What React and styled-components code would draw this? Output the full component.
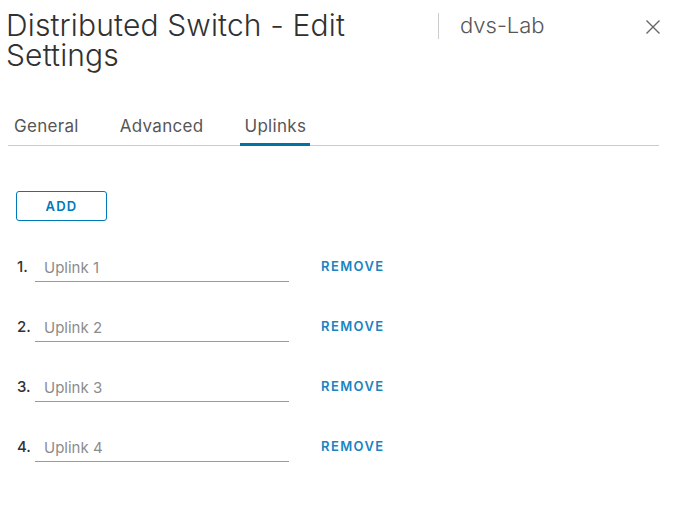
import React from 'react';
import styled, { createGlobalStyle } from 'styled-components';

const GlobalStyle = createGlobalStyle`
  body {
    margin: 0;
    background: #fff;
    font-family: Inter, "Open Sans", sans-serif;
  }
`;

const Modal = styled.div`
  width: 679px;
  height: 524px;
  box-sizing: border-box;
  padding: 10px 0 0 6px;
`;

const Header = styled.div`
  display: flex;
  align-items: flex-start;
`;

const Title = styled.h1`
  margin: 0;
  width: 420px;
  font-size: 30px;
  line-height: 30px;
  font-weight: 300;
  letter-spacing: 0.15px;
  color: #313131;
`;

const Divider = styled.div`
  width: 1px;
  height: 26px;
  margin: 3px 0 0 12px;
  background: #ccc;
`;

const Subtitle = styled.div`
  flex: 1;
  margin-left: 21px;
  font-size: 22px;
  line-height: 30px;
  font-weight: 300;
  color: #565656;
`;

const Close = styled.button`
  border: 0;
  background: none;
  padding: 0;
  margin: 9px 18px 0 0;
  width: 16px;
  height: 16px;
  cursor: pointer;
`;

const Tabs = styled.nav`
  display: flex;
  gap: 33px;
  width: 651px;
  margin: 40px 0 0 2px;
  padding-left: 2px;
  box-sizing: border-box;
  border-bottom: 1px solid #ccc;
`;

const Tab = styled.div`
  padding: 4px 4px 5px;
  font-size: 17px;
  line-height: 24px;
  letter-spacing: 0.3px;
  color: #565656;
  border-bottom: 3px solid ${(p) => (p.active ? '#0072a3' : 'transparent')};
  margin-bottom: -1px;
`;

const Body = styled.div`
  padding: 45px 0 0 10px;
`;

const OutlineButton = styled.button`
  width: 91px;
  height: 30px;
  border: 1px solid #0079b8;
  border-radius: 3px;
  background: #fff;
  color: #0079b8;
  font-family: inherit;
  font-size: 13px;
  font-weight: 600;
  letter-spacing: 1.2px;
  cursor: pointer;
`;

const List = styled.ol`
  list-style: none;
  margin: 33px 0 0;
  padding: 0;
  display: flex;
  flex-direction: column;
  gap: 36px;
`;

const Row = styled.li`
  display: flex;
  align-items: center;
  height: 24px;
`;

const Num = styled.span`
  width: 18px;
  padding-left: 1px;
  font-size: 15px;
  font-weight: 500;
  color: #313131;
`;

const Field = styled.div`
  width: 254px;
  box-sizing: border-box;
  padding: 0 0 3px 9px;
  border-bottom: 1px solid #9a9a9a;
  font-size: 15px;
  line-height: 20px;
  color: #8c8c8c;
  transform: translateY(4px);
`;

const TextButton = styled.button`
  margin-left: 28px;
  border: 0;
  background: none;
  padding: 0 4px;
  color: #1a83c0;
  font-family: inherit;
  font-size: 13px;
  font-weight: 600;
  letter-spacing: 1.4px;
  cursor: pointer;
`;

const CloseIcon = () => (
  <svg width="16" height="16" viewBox="0 0 16 16">
    <path d="M1.5 1.5 L14.5 14.5 M14.5 1.5 L1.5 14.5" stroke="#666" strokeWidth="1.4" fill="none" />
  </svg>
);

const uplinks = ['Uplink 1', 'Uplink 2', 'Uplink 3', 'Uplink 4'];

export default function App() {
  return (
    <>
      <GlobalStyle />
      <Modal>
        <Header>
          <Title>Distributed Switch - Edit Settings</Title>
          <Divider />
          <Subtitle>dvs-Lab</Subtitle>
          <Close aria-label="Close">
            <CloseIcon />
          </Close>
        </Header>
        <Tabs>
          <Tab>General</Tab>
          <Tab>Advanced</Tab>
          <Tab active>Uplinks</Tab>
        </Tabs>
        <Body>
          <OutlineButton>ADD</OutlineButton>
          <List>
            {uplinks.map((u, i) => (
              <Row key={u}>
                <Num>{i + 1}.</Num>
                <Field>{u}</Field>
                <TextButton>REMOVE</TextButton>
              </Row>
            ))}
          </List>
        </Body>
      </Modal>
    </>
  );
}
